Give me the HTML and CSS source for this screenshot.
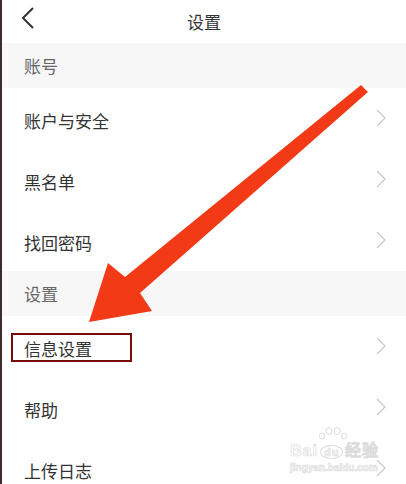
FILE: index.html
```html
<!DOCTYPE html>
<html lang="zh-CN">
<head>
  <meta charset="UTF-8" />
  <meta name="viewport" content="width=device-width, initial-scale=1.0" />
  <title>设置</title>
  <link rel="stylesheet" href="styles.css">
</head>
<body>
  <div class="screen">
    <div class="topbar">
      <svg class="back" width="14" height="22" viewBox="0 0 14 22"><polyline points="12,1 2,11 12,21" fill="none" stroke="#333" stroke-width="2"/></svg>
      <div class="title">设置</div>
    </div>

    <div class="group-title">账号</div>
    <div class="row"><span>账户与安全</span><svg class="arrow" width="10" height="18" viewBox="0 0 10 18"><polyline points="1,1 9,9 1,17" fill="none" stroke="#c8c8c8" stroke-width="1.2"/></svg></div>
    <div class="row"><span>黑名单</span><svg class="arrow" width="10" height="18" viewBox="0 0 10 18"><polyline points="1,1 9,9 1,17" fill="none" stroke="#c8c8c8" stroke-width="1.2"/></svg></div>
    <div class="row"><span>找回密码</span><svg class="arrow" width="10" height="18" viewBox="0 0 10 18"><polyline points="1,1 9,9 1,17" fill="none" stroke="#c8c8c8" stroke-width="1.2"/></svg></div>

    <div class="group-title">设置</div>
    <div class="row"><span class="marked">信息设置</span><svg class="arrow" width="10" height="18" viewBox="0 0 10 18"><polyline points="1,1 9,9 1,17" fill="none" stroke="#c8c8c8" stroke-width="1.2"/></svg></div>
    <div class="row"><span>帮助</span><svg class="arrow" width="10" height="18" viewBox="0 0 10 18"><polyline points="1,1 9,9 1,17" fill="none" stroke="#c8c8c8" stroke-width="1.2"/></svg></div>
    <div class="row"><span>上传日志</span><svg class="arrow" width="10" height="18" viewBox="0 0 10 18"><polyline points="1,1 9,9 1,17" fill="none" stroke="#c8c8c8" stroke-width="1.2"/></svg></div>

    <!-- annotation arrow drawn over the list -->
    <svg class="pointer" width="406" height="484" viewBox="0 0 406 484">
      <polygon points="361,85 125,277 108,263 89,322 152,311 140,293 368,92" fill="#f23a17"/>
    </svg>

    <div class="watermark">
      <svg class="toes" width="30" height="14" viewBox="0 0 30 14">
        <g fill="#fff" stroke="#dcdcdc" stroke-width="1">
          <ellipse cx="4" cy="10" rx="2.5" ry="3"/>
          <ellipse cx="11" cy="5" rx="3" ry="3.5"/>
          <ellipse cx="19" cy="5" rx="3" ry="3.5"/>
          <ellipse cx="26" cy="10" rx="2.5" ry="3"/>
        </g>
      </svg>
      <div class="wm-top">Bai<span class="paw">du</span>经验</div>
      <div class="wm-url">jingyan.baidu.com</div>
    </div>
  </div>
</body>
</html>
```

FILE: styles.css
```css
body {
  margin: 0;
  background: #fff;
  font-family: "Noto Sans CJK SC", "Noto Sans", sans-serif;
  color: #333;
  overflow: hidden;
}

.screen {
  position: relative;
  height: 484px;
  border-left: 2px solid #3b2d2d;
  overflow: hidden;
}

.topbar {
  position: relative;
  height: 43px;
  display: flex;
  align-items: center;
  justify-content: center;
}

.back {
  position: absolute;
  left: 19px;
  top: 7px;
}

.title {
  font-size: 17px;
  line-height: 40px;
  color: #333;
}

.group-title {
  height: 45px;
  background: #f7f7f7;
  padding-left: 22px;
  font-size: 17px;
  line-height: 46px;
  color: #666;
}

.row {
  height: 61px;
  display: flex;
  align-items: center;
  justify-content: space-between;
  padding: 0 20px 0 22px;
  font-size: 17px;
  color: #333;
}

.row span {
  position: relative;
  top: 2px;
}

.row .arrow {
  position: relative;
  top: -1px;
}

.marked::after {
  content: "";
  position: absolute;
  left: -13px;
  right: -40px;
  top: -3px;
  bottom: -1px;
  border: 2.5px solid #7a0b0b;
}

.pointer {
  position: absolute;
  left: -2px;
  top: 0;
}

.watermark {
  position: absolute;
  left: 288px;
  top: 426px;
  font-family: "Liberation Sans", sans-serif;
  color: #fff;
  -webkit-text-stroke: 0.7px #dcdcdc;
}

.toes {
  display: block;
  margin-left: 28px;
  margin-bottom: -3px;
}

.wm-top {
  font-size: 16px;
  font-weight: bold;
  letter-spacing: 1px;
}

.wm-top .paw {
  display: inline-block;
  font-size: 11px;
  border: 1px solid #dcdcdc;
  border-radius: 50%;
  padding: 0 3px;
  margin: 0 2px;
}

.wm-url {
  font-size: 10px;
  font-weight: bold;
  margin-top: 1px;
}
```
